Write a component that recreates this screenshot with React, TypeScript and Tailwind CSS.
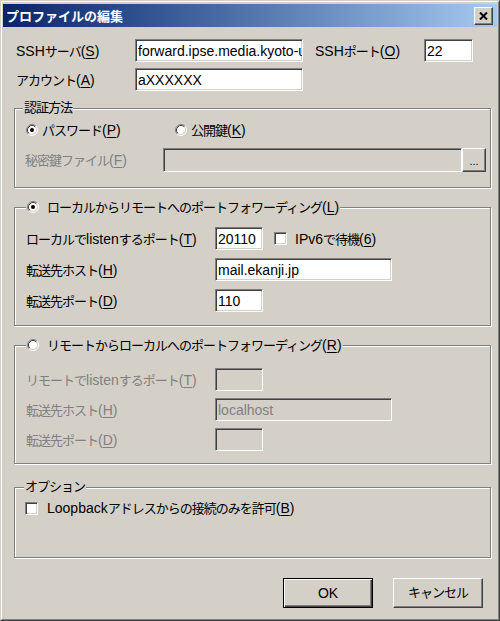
import React from "react";

const CJK = /([\u3000-\u30ff\u4e00-\u9fff\uff00-\uffef]+)/;

const sunken =
    "border border-t-[#808080] border-l-[#808080] border-b-white border-r-white shadow-[inset_1px_1px_0_#404040,inset_-1px_-1px_0_#d4d0c8]";
const raised =
    "border border-t-white border-l-white border-b-[#404040] border-r-[#404040] shadow-[inset_-1px_-1px_0_#808080]";
const etched = "border border-[#808080] shadow-[inset_1px_1px_0_#fff,1px_1px_0_#fff]";

// mixes the two sizes, kana/kanji run narrower than latin in the original UI font
function T({ s }: { s: string }) {
    return <>
        {s.split(CJK).map((p, i) => {
            if (p === "") return null;
            if (CJK.test(p)) return <span key={i} className="text-[13px] tracking-[-1px]">{p}</span>;
            return <span key={i} className="text-[14px]">{p}</span>;
        })}
    </>;
}

function Lbl({ t, k, dim }: { t: string; k: string; dim?: boolean }) {
    return (
        <span className={"whitespace-nowrap leading-[16px] " + (dim ? "text-[#808080]" : "text-black")}>
            <T s={t} />
            <span className="text-[14px]">(<span className="underline underline-offset-2">{k}</span>)</span>
        </span>
    );
}

function Radio({ checked }: { checked?: boolean }) {
    return (
        <svg width="12" height="12" viewBox="0 0 12 12" className="shrink-0">
            <circle cx="6" cy="6" r="4.5" fill="#fff" />
            <path d="M2.11 9.89 A5.5 5.5 0 0 1 9.89 2.11" fill="none" stroke="#808080" />
            <path d="M9.89 2.11 A5.5 5.5 0 0 1 2.11 9.89" fill="none" stroke="#fff" />
            <path d="M2.82 9.18 A4.5 4.5 0 0 1 9.18 2.82" fill="none" stroke="#404040" />
            <path d="M9.18 2.82 A4.5 4.5 0 0 1 2.82 9.18" fill="none" stroke="#d4d0c8" />
            {checked && <circle cx="6" cy="6" r="2" fill="#000" />}
        </svg>
    );
}

function Check() {
    return <span className={"block w-[13px] h-[13px] bg-white shrink-0 " + sunken}></span>;
}

function Field({ w, h = 23, value, disabled }: { w: string; h?: number; value?: string; disabled?: boolean }) {
    return (
        <div className={w + (h === 24 ? " h-[24px] " : " h-[23px] ") + "flex items-center pl-[2px] overflow-hidden whitespace-nowrap shrink-0 " + sunken + (disabled ? " bg-[#d4d0c8] text-[#808080]" : " bg-white text-black")}>
            <span className="text-[14px] leading-[16px]">{value}</span>
        </div>
    );
}

function Row({ label, k, dim, children, mt }: any) {
    return (
        <div className={"flex items-center h-[23px] " + mt}>
            <div className="w-[189px]"><Lbl t={label} k={k} dim={dim} /></div>
            {children}
        </div>
    );
}

export default function App() {
    return (
        <div className="w-[500px] h-[621px] bg-[#d4d0c8] flex flex-col border border-t-[#d4d0c8] border-l-[#d4d0c8] border-b-[#404040] border-r-[#404040] font-['Liberation_Sans','Noto_Sans_CJK_JP',sans-serif] text-black select-none">
            <div className="flex-1 flex flex-col px-[1px] pt-[2px] border border-t-white border-l-white border-b-[#808080] border-r-[#808080]">
                {/* title bar */}
                <div className="h-[23px] flex items-center justify-between pl-[3px] pr-[4px] bg-linear-to-r from-[#0a246a] to-[#a6caf0]">
                    <span className="text-white font-bold text-[13px] leading-[16px] font-['Noto_Sans_CJK_JP',sans-serif]">プロファイルの編集</span>
                    <div className={"w-[19px] h-[18px] bg-[#d4d0c8] flex items-center justify-center " + raised}>
                        <svg width="9" height="8" viewBox="0 0 9 8">
                            <path d="M1 0.5 L8 7.5 M8 0.5 L1 7.5" stroke="#000" strokeWidth="2" />
                        </svg>
                    </div>
                </div>

                <div className="flex flex-col px-[11px]">
                    <div className="flex items-center h-[23px] mt-[12px] pl-[2px]">
                        <div className="w-[119px]"><Lbl t="SSHサーバ" k="S" /></div>
                        <Field w="w-[168px]" value="forward.ipse.media.kyoto-u.ac.jp" />
                        <div className="w-[109px] ml-[12px]"><Lbl t="SSHポート" k="O" /></div>
                        <Field w="w-[49px]" value="22" />
                    </div>
                    <div className="flex items-center h-[23px] mt-[6px] pl-[2px]">
                        <div className="w-[119px]"><Lbl t="アカウント" k="A" /></div>
                        <Field w="w-[168px]" value="aXXXXXX" />
                    </div>

                    {/* 認証方法 */}
                    <div className={"w-[477px] mt-[17px] pl-[11px] pb-[15px] " + etched}>
                        <div className="-mt-[8px] -ml-[3px] w-fit px-[1px] h-[14px] flex items-center bg-[#d4d0c8] leading-[14px]"><T s="認証方法" /></div>
                        <div className="flex items-center h-[16px] mt-[7px]">
                            <div className="w-[149px] flex items-center">
                                <Radio checked />
                                <span className="ml-[4px]"><Lbl t="パスワード" k="P" /></span>
                            </div>
                            <Radio />
                            <span className="ml-[4px]"><Lbl t="公開鍵" k="K" /></span>
                        </div>
                        <div className="flex items-center h-[24px] mt-[10px]">
                            <div className="w-[138px] -ml-[1px]"><Lbl t="秘密鍵ファイル" k="F" dim /></div>
                            <Field w="w-[299px]" h={24} disabled />
                            <div className={"w-[24px] h-[24px] flex items-end justify-center pb-[4px] text-[11px] leading-[11px] " + raised}>...</div>
                        </div>
                    </div>

                    {/* local -> remote */}
                    <div className={"w-[477px] mt-[19px] pl-[11px] pb-[13px] " + etched}>
                        <div className="-mt-[9px] w-fit px-[1px] h-[16px] flex items-center bg-[#d4d0c8]">
                            <Radio checked />
                            <span className="ml-[8px]"><Lbl t="ローカルからリモートへのポートフォワーディング" k="L" /></span>
                        </div>
                        <Row label="ローカルでlistenするポート" k="T" mt="mt-[12px]">
                            <Field w="w-[48px]" value="20110" />
                            <span className="ml-[11px]"><Check /></span>
                            <span className="ml-[8px]"><Lbl t="IPv6で待機" k="6" /></span>
                        </Row>
                        <Row label="転送先ホスト" k="H" mt="mt-[8px]">
                            <Field w="w-[177px]" value="mail.ekanji.jp" />
                        </Row>
                        <Row label="転送先ポート" k="D" mt="mt-[8px]">
                            <Field w="w-[48px]" value="110" />
                        </Row>
                    </div>

                    {/* remote -> local */}
                    <div className={"w-[477px] mt-[19px] pl-[11px] pb-[12px] " + etched}>
                        <div className="-mt-[9px] w-fit px-[1px] h-[16px] flex items-center bg-[#d4d0c8]">
                            <Radio />
                            <span className="ml-[8px]"><Lbl t="リモートからローカルへのポートフォワーディング" k="R" /></span>
                        </div>
                        <Row label="リモートでlistenするポート" k="T" dim mt="mt-[15px]">
                            <Field w="w-[48px]" disabled />
                        </Row>
                        <Row label="転送先ホスト" k="H" dim mt="mt-[7px]">
                            <Field w="w-[177px]" value="localhost" disabled />
                        </Row>
                        <Row label="転送先ポート" k="D" dim mt="mt-[7px]">
                            <Field w="w-[48px]" disabled />
                        </Row>
                    </div>

                    {/* options */}
                    <div className={"w-[477px] mt-[23px] pl-[11px] pb-[41px] " + etched}>
                        <div className="-mt-[8px] -ml-[2px] w-fit px-[1px] h-[14px] flex items-center bg-[#d4d0c8] leading-[14px]"><T s="オプション" /></div>
                        <div className="flex items-center h-[16px] mt-[6px] -ml-[1px]">
                            <Check />
                            <span className="ml-[9px]"><Lbl t="Loopbackアドレスからの接続のみを許可" k="B" /></span>
                        </div>
                    </div>

                    <div className="flex justify-end gap-[20px] pr-[3px] mt-[20px]">
                        <button className="w-[90px] h-[30px] flex items-center justify-center border border-black shadow-[inset_1px_1px_0_#fff,inset_-1px_-1px_0_#404040,inset_-2px_-2px_0_#808080] text-[14px] leading-[16px]">OK</button>
                        <button className={"w-[90px] h-[30px] flex items-center justify-center leading-[16px] " + raised}><T s="キャンセル" /></button>
                    </div>
                </div>
            </div>
        </div>
    );
}
